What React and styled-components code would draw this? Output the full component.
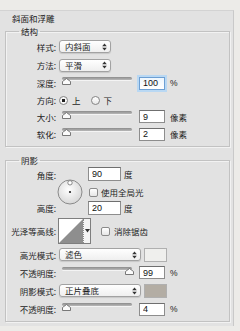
import styled, { createGlobalStyle, css } from "styled-components";

const GlobalStyle = createGlobalStyle`
  html, body { margin: 0; padding: 0; }
  body {
    width: 240px;
    height: 331px;
    overflow: hidden;
    background: #ecebe8;
    font-family: "Noto Sans CJK SC", "Noto Sans", sans-serif;
    color: #1c1c1c;
  }
`;

function Arrows() {
    return (
        <svg width="5" height="8" viewBox="0 0 5 8">
            <polygon points="2.5,0.5 4.8,3.2 0.2,3.2" fill="#333" />
            <polygon points="0.2,4.8 4.8,4.8 2.5,7.5" fill="#333" />
        </svg>
    );
}

function Thumb() {
    return (
        <svg width="9" height="7" viewBox="0 0 9 7">
            <polygon points="4.5,0.5 8.5,3.5 8.5,6.5 0.5,6.5 0.5,3.5" fill="#fbfbfb" stroke="#6a6a6a" strokeWidth="0.9" />
        </svg>
    );
}

function RangeSlider({ pos }) {
    return (
        <Slider>
            <Track />
            <ThumbWrap style={{ left: `calc(${pos * 100}% - ${pos * 9}px)` }}>
                <Thumb />
            </ThumbWrap>
        </Slider>
    );
}

function Dial() {
    return (
        <DialBox>
            <svg width="26" height="26" viewBox="0 0 26 26">
                <defs>
                    <radialGradient id="dialg" cx="45%" cy="40%" r="65%">
                        <stop offset="0" stopColor="#ffffff" />
                        <stop offset="1" stopColor="#d4d4d4" />
                    </radialGradient>
                </defs>
                <circle cx="13" cy="13" r="12" fill="url(#dialg)" stroke="#8a8a8a" />
                <circle cx="13" cy="3.8" r="2.2" fill="#fff" stroke="#6f6f6f" strokeWidth="0.8" />
                <circle cx="13" cy="13" r="1.1" fill="#222" />
            </svg>
        </DialBox>
    );
}

function Contour() {
    return (
        <ContourBox>
            <svg width="24" height="24" viewBox="0 0 24 24">
                <rect width="24" height="24" fill="#fff" />
                <polygon points="0,24 24,0 24,24" fill="#8e8e8e" />
            </svg>
            <ContourDrop>
                <svg width="5" height="4" viewBox="0 0 5 4">
                    <polygon points="0,0 5,0 2.5,3.5" fill="#333" />
                </svg>
            </ContourDrop>
        </ContourBox>
    );
}

function App() {
    return (
        <>
            <GlobalStyle />
            <Panel>
                <Title>斜面和浮雕</Title>

                <Group $pb={3}>
                    <Legend>结构</Legend>
                    <Row $h={19}>
                        <Label>样式:</Label>
                        <Select $w={52}><span>内斜面</span><Arrows /></Select>
                    </Row>
                    <Row $h={18}>
                        <Label>方法:</Label>
                        <Select $w={52}><span>平滑</span><Arrows /></Select>
                    </Row>
                    <Row $h={18}>
                        <Label>深度:</Label>
                        <RangeSlider pos={0.04} />
                        <Field $w={26} $focus readOnly defaultValue="100" />
                        <Unit>%</Unit>
                    </Row>
                    <Row $h={16}>
                        <Label>方向:</Label>
                        <Radio $checked />
                        <RadioText>上</RadioText>
                        <Radio />
                        <RadioText>下</RadioText>
                    </Row>
                    <Row $h={17}>
                        <Label>大小:</Label>
                        <RangeSlider pos={0.04} />
                        <Field $w={26} readOnly defaultValue="9" />
                        <Unit>像素</Unit>
                    </Row>
                    <Row $h={18}>
                        <Label>软化:</Label>
                        <RangeSlider pos={0.04} />
                        <Field $w={26} readOnly defaultValue="2" />
                        <Unit>像素</Unit>
                    </Row>
                </Group>

                <Group $pb={2} $gap>
                    <Legend>阴影</Legend>
                    <AngleBlock>
                        <LabelColumn>
                            <Label>角度:</Label>
                            <Label>高度:</Label>
                        </LabelColumn>
                        <Dial />
                        <AngleControls>
                            <Line>
                                <Field $w={33} $h={14} readOnly defaultValue="90" />
                                <SmallUnit>度</SmallUnit>
                            </Line>
                            <Line $mt={4}>
                                <Check $ml={1} />
                                <CheckText>使用全局光</CheckText>
                            </Line>
                            <Line $mt={2}>
                                <Field $w={33} $h={14} readOnly defaultValue="20" />
                                <SmallUnit>度</SmallUnit>
                            </Line>
                        </AngleControls>
                    </AngleBlock>
                    <Row $h={30}>
                        <Label>光泽等高线:</Label>
                        <Contour />
                        <Check $ml={10} />
                        <CheckText $ml={4}>消除锯齿</CheckText>
                    </Row>
                    <Row $h={17}>
                        <Label>高光模式:</Label>
                        <Select $w={82}><span>滤色</span><Arrows /></Select>
                        <Swatch $color="#efefed" />
                    </Row>
                    <Row $h={19}>
                        <Label>不透明度:</Label>
                        <RangeSlider pos={0.99} />
                        <Field $w={26} readOnly defaultValue="99" />
                        <Unit>%</Unit>
                    </Row>
                    <Row $h={17}>
                        <Label>阴影模式:</Label>
                        <Select $w={82}><span>正片叠底</span><Arrows /></Select>
                        <Swatch $color="#b3ada4" />
                    </Row>
                    <Row $h={20}>
                        <Label>不透明度:</Label>
                        <RangeSlider pos={0.04} />
                        <Field $w={26} readOnly defaultValue="4" />
                        <Unit>%</Unit>
                    </Row>
                </Group>
            </Panel>
        </>
    );
}

export default App;

const Panel = styled.div`
    margin-top: 10px;
    width: 225px;
    padding: 0 3px 4px 5px;
    background: #e2e2e2;
    border-top: 1px solid #d3d3d3;
    border-right: 1px solid #c9c9c9;
`;

const Title = styled.div`
    height: 15px;
    line-height: 15px;
    padding-left: 7px;
    font-size: 8.5px;
`;

const Group = styled.fieldset`
    margin: ${p => (p.$gap ? "8px" : "0")} 0 0 0;
    padding: 1px 0 ${p => p.$pb}px 0;
    min-width: 0;
    border: 1px solid #c2c2c2;
    box-shadow: inset 1px 1px 0 #f2f2f2, 1px 1px 0 #f2f2f2;
`;

const Legend = styled.legend`
    margin-left: 13px;
    padding: 0 2px;
    font-size: 8.5px;
    line-height: 10px;
`;

const Row = styled.div`
    display: flex;
    align-items: center;
    height: ${p => p.$h}px;
`;

const Label = styled.span`
    flex: none;
    width: 50px;
    margin-right: 3px;
    text-align: right;
    font-size: 8.5px;
    line-height: 12px;
    white-space: nowrap;
`;

const Select = styled.div`
    flex: none;
    width: ${p => p.$w}px;
    height: 13px;
    box-sizing: border-box;
    display: flex;
    align-items: center;
    justify-content: space-between;
    padding: 0 3px 0 5px;
    border: 1px solid #a2a2a2;
    border-radius: 3px;
    background: linear-gradient(#ffffff, #efefef);
    box-shadow: 0 1px 1px rgba(0, 0, 0, 0.12);
    font-size: 8.5px;
    line-height: 11px;
`;

const Slider = styled.div`
    position: relative;
    flex: none;
    width: 76px;
    height: 14px;
`;

const Track = styled.div`
    margin: 1px 3px 0;
    height: 3px;
    border-radius: 2px;
    background: linear-gradient(#8c8c8c, #b8b8b8);
    box-shadow: 0 1px 0 #f4f4f4;
`;

const ThumbWrap = styled.div`
    position: absolute;
    top: 2px;
    width: 9px;
    height: 7px;
    line-height: 0;
`;

const Field = styled.input`
    flex: none;
    width: ${p => p.$w}px;
    height: ${p => p.$h || 13}px;
    box-sizing: border-box;
    margin: 0 0 0 ${p => (p.$h ? 0 : 4)}px;
    padding: 0 3px;
    border: 1px solid #8d8d8d;
    border-top-color: #6f6f6f;
    border-radius: 0;
    outline: none;
    background: #fff;
    color: #111;
    font-family: "Liberation Sans", Arial, sans-serif;
    font-size: 9px;
    ${p => p.$focus && css`
        border-color: #6d9fd3;
        box-shadow: 0 0 0 2px #b9d8f3;
        background: linear-gradient(#eef6fd, #ffffff);
    `}
`;

const Unit = styled.span`
    margin-left: 5px;
    font-size: 8.5px;
    font-family: "Liberation Sans", "Noto Sans CJK SC", sans-serif;
`;

const SmallUnit = styled(Unit)`
    margin-left: 3px;
`;

const Radio = styled.span`
    flex: none;
    width: 9px;
    height: 9px;
    box-sizing: border-box;
    border-radius: 50%;
    border: 1px solid #858585;
    background: ${p => (p.$checked
        ? "radial-gradient(circle, #1e1e1e 0 1.6px, #f7f7f7 2px)"
        : "linear-gradient(#ffffff, #e8e8e8)")};
`;

const RadioText = styled.span`
    margin: 0 10px 0 4px;
    font-size: 8.5px;
`;

const AngleBlock = styled.div`
    display: flex;
    height: 50px;
`;

const LabelColumn = styled.div`
    display: flex;
    flex-direction: column;
    justify-content: space-between;
    padding: 3px 0 2px;
`;

const DialBox = styled.div`
    flex: none;
    margin: 13px 0 0 -2px;
    width: 26px;
    height: 26px;
    line-height: 0;
`;

const AngleControls = styled.div`
    display: flex;
    flex-direction: column;
    margin-left: 5px;
    padding-top: 1px;
`;

const Line = styled.div`
    display: flex;
    align-items: center;
    height: 14px;
    margin-top: ${p => p.$mt || 0}px;
`;

const Check = styled.span`
    flex: none;
    width: 9px;
    height: 9px;
    box-sizing: border-box;
    margin-left: ${p => p.$ml}px;
    border: 1px solid #8a8a8a;
    border-radius: 2px;
    background: linear-gradient(#ffffff, #e6e6e6);
`;

const CheckText = styled.span`
    margin-left: ${p => p.$ml || 3}px;
    font-size: 8.5px;
    white-space: nowrap;
`;

const ContourBox = styled.div`
    display: flex;
    flex: none;
    margin-left: -1px;
    height: 24px;
    border: 1px solid #7e7e7e;
    line-height: 0;
`;

const ContourDrop = styled.div`
    display: flex;
    align-items: center;
    justify-content: center;
    width: 6px;
    border-left: 1px dotted #8a8a8a;
    background: #f4f4f4;
`;

const Swatch = styled.div`
    flex: none;
    width: 23px;
    height: 14px;
    box-sizing: border-box;
    margin-left: 3px;
    border: 1px solid #b0b0b0;
    background: ${p => p.$color};
`;
